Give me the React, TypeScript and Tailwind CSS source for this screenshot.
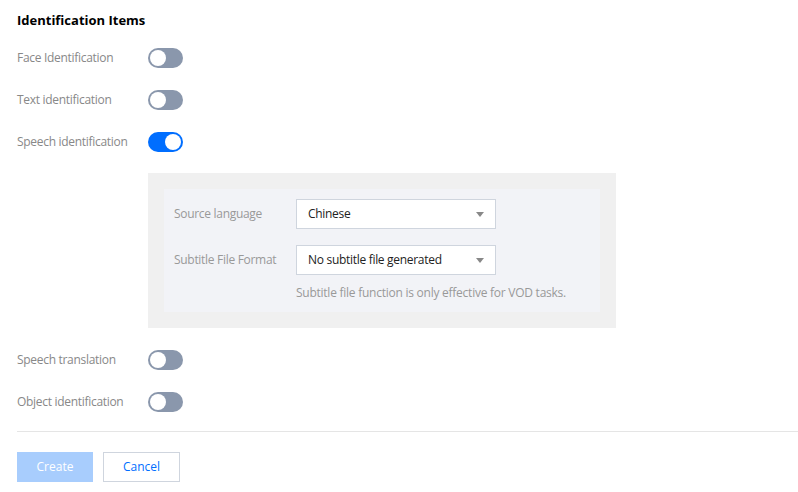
import { useState } from 'react';

const Toggle = ({ on, onChange }: { on: boolean; onChange: (v: boolean) => void }) => (
  <button
    type="button"
    onClick={() => onChange(!on)}
    className={`flex h-[20px] w-[35px] items-center rounded-full px-[2px] ${
      on ? 'justify-end bg-[#006eff]' : 'justify-start bg-[#8a97ac]'
    }`}
  >
    <span className="h-[16px] w-[16px] rounded-full bg-white" />
  </button>
);

const Row = ({ label, on, onChange }: { label: string; on: boolean; onChange: (v: boolean) => void }) => (
  <div className="flex h-[20px] items-center">
    <span className="w-[131px] text-[12px] tracking-[-0.3px] text-[#888]">{label}</span>
    <Toggle on={on} onChange={onChange} />
  </div>
);

const Caret = () => (
  <svg width="8" height="5" viewBox="0 0 8 5" className="fill-[#888]">
    <path d="M0 0h8L4 5z" />
  </svg>
);

const SelectBox = ({ value }: { value: string }) => (
  <div className="flex h-[30px] w-[200px] items-center justify-between border border-[#cfd5de] bg-white pl-[11px] pr-[11px] text-[12px] tracking-[-0.3px] text-[#222]">
    <span>{value}</span>
    <Caret />
  </div>
);

export default function App() {
  const [items, setItems] = useState({
    face: false,
    text: false,
    speech: true,
    translation: false,
    object: false,
  });
  const set = (k: keyof typeof items) => (v: boolean) => setItems({ ...items, [k]: v });

  return (
    <div className="flex min-h-[492px] flex-col bg-white pl-[17px] pt-[12px] font-['Segoe_UI','Open_Sans',sans-serif]">
      <h3 className="text-[13px] font-bold leading-[17px] text-black">Identification Items</h3>

      <div className="mt-[19px] flex flex-col gap-[22px]">
        <Row label="Face Identification" on={items.face} onChange={set('face')} />
        <Row label="Text identification" on={items.text} onChange={set('text')} />
        <Row label="Speech identification" on={items.speech} onChange={set('speech')} />
      </div>

      <div className="ml-[131px] mt-[21px] w-[468px] bg-[#f0f0f0] p-[16px]">
        <div className="flex flex-col gap-[16px] bg-[#f2f3f7] px-[10px] pb-[10px] pt-[10px]">
          <div className="flex items-center">
            <span className="w-[122px] text-[12px] tracking-[-0.3px] text-[#999]">Source language</span>
            <SelectBox value="Chinese" />
          </div>
          <div className="flex flex-col">
            <div className="flex items-center">
              <span className="w-[122px] text-[12px] tracking-[-0.3px] text-[#999]">Subtitle File Format</span>
              <SelectBox value="No subtitle file generated" />
            </div>
            <p className="ml-[122px] mt-[9px] text-[12px] leading-[18px] tracking-[-0.25px] text-[#999]">
              Subtitle file function is only effective for VOD tasks.
            </p>
          </div>
        </div>
      </div>

      <div className="mt-[22px] flex flex-col gap-[22px]">
        <Row label="Speech translation" on={items.translation} onChange={set('translation')} />
        <Row label="Object identification" on={items.object} onChange={set('object')} />
      </div>

      <div className="mt-[19px] h-px bg-[#e5e5e5]" />

      <div className="mt-[20px] flex gap-[10px]">
        <button type="button" className="h-[30px] w-[76px] bg-[#a8cdfd] text-[12px] text-white">
          Create
        </button>
        <button type="button" className="h-[30px] w-[77px] border border-[#cfd5de] bg-white text-[12px] text-[#006eff]">
          Cancel
        </button>
      </div>
    </div>
  );
}
